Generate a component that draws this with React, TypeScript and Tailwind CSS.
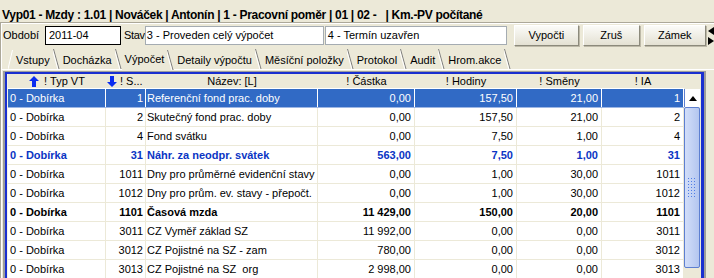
import React from 'react';

type Row = {
    typ: string;
    s: string;
    nazev: string;
    castka: string;
    hodiny: string;
    smeny: string;
    ia: string;
    kind?: 'sel' | 'blue' | 'bold';
};

const rows: Row[] = [
    { typ: '0 - Dobírka', s: '1', nazev: 'Referenční fond prac. doby', castka: '0,00', hodiny: '157,50', smeny: '21,00', ia: '1', kind: 'sel' },
    { typ: '0 - Dobírka', s: '2', nazev: 'Skutečný fond prac. doby', castka: '0,00', hodiny: '157,50', smeny: '21,00', ia: '2' },
    { typ: '0 - Dobírka', s: '4', nazev: 'Fond svátku', castka: '0,00', hodiny: '7,50', smeny: '1,00', ia: '4' },
    { typ: '0 - Dobírka', s: '31', nazev: 'Náhr. za neodpr. svátek', castka: '563,00', hodiny: '7,50', smeny: '1,00', ia: '31', kind: 'blue' },
    { typ: '0 - Dobírka', s: '1011', nazev: 'Dny pro průměrné evidenční stavy', castka: '0,00', hodiny: '1,00', smeny: '30,00', ia: '1011' },
    { typ: '0 - Dobírka', s: '1012', nazev: 'Dny pro prům. ev. stavy - přepočt.', castka: '0,00', hodiny: '1,00', smeny: '30,00', ia: '1012' },
    { typ: '0 - Dobírka', s: '1101', nazev: 'Časová mzda', castka: '11 429,00', hodiny: '150,00', smeny: '20,00', ia: '1101', kind: 'bold' },
    { typ: '0 - Dobírka', s: '3011', nazev: 'CZ Vyměř základ SZ', castka: '11 992,00', hodiny: '0,00', smeny: '0,00', ia: '3011' },
    { typ: '0 - Dobírka', s: '3012', nazev: 'CZ Pojistné na SZ - zam', castka: '780,00', hodiny: '0,00', smeny: '0,00', ia: '3012' },
    { typ: '0 - Dobírka', s: '3013', nazev: 'CZ Pojistné na SZ  org', castka: '2 998,00', hodiny: '0,00', smeny: '0,00', ia: '3013' },
];

const tabs = ['Vstupy', 'Docházka', 'Výpočet', 'Detaily výpočtu', 'Měsíční položky', 'Protokol', 'Audit', 'Hrom.akce'];

const ArrowUp = () => (
    <svg width="10" height="11" viewBox="0 0 10 11" className="shrink-0">
        <path d="M5 0 L10 5 L7 5 L7 11 L3 11 L3 5 L0 5 Z" fill="#0a2cf0" />
    </svg>
);

const ArrowDown = () => (
    <svg width="10" height="11" viewBox="0 0 10 11" className="shrink-0">
        <path d="M3 0 L7 0 L7 6 L10 6 L5 11 L0 6 L3 6 Z" fill="#0a2cf0" />
    </svg>
);

// right edge of an old style tab: "\"
const Slant = () => (
    <svg width="7" height="20" viewBox="0 0 7 20" className="shrink-0">
        <path d="M0.5 0 L6 20" stroke="#808080" strokeWidth="1" fill="none" />
        <path d="M-0.5 1 L5 21" stroke="#ffffff" strokeWidth="1" fill="none" />
    </svg>
);

const Button = ({ label, w }: { label: string; w: string }) => (
    <div
        className={`${w} h-[21px] flex items-center justify-center border border-t-white border-l-white border-r-[#8c8a7c] border-b-[#8c8a7c] bg-[#f1efe6] bg-linear-to-b from-[#fbfbf8] to-[#e4e1d3] shadow-[1px_1px_0_#bdb9a8]`}
    >
        {label}
    </div>
);

export default function App() {
    return (
        <div className="w-[714px] h-[278px] overflow-hidden bg-[#ECE9D8] text-[11px] text-black font-['Liberation_Sans',Arial,sans-serif]">
            <div className="h-[22px] pl-[2px] pt-[9px] font-bold text-[12px] leading-[13px] tracking-[-0.3px] whitespace-pre">
                Vyp01 - Mzdy : 1.01 | Nováček | Antonín | 1 - Pracovní poměr | 01 | 02 -   | Km.-PV počítané
            </div>
            <div className="border-t border-l border-[#aca899]">
                <div className="border-t border-l border-white">
                    {/* období / stav */}
                    <div className="h-[23px] flex items-center">
                        <span className="ml-[1px] w-[42px]">Období</span>
                        <div className="w-[76px] h-[19px] border border-black bg-white pl-[3px] leading-[17px]">2011-04</div>
                        <span className="ml-[3px] tracking-[-0.3px]">Stav</span>
                        <div className="w-[179px] h-[19px] border border-[#a5acb2] bg-white pl-[1px] leading-[17px]">3 - Proveden celý výpočet</div>
                        <div className="ml-[1px] w-[182px] h-[19px] border border-[#a5acb2] bg-white pl-[2px] leading-[17px]">4 - Termín uzavřen</div>
                        <div className="ml-[7px] flex gap-[4px]">
                            <Button label="Vypočti" w="w-[65px]" />
                            <Button label="Zruš" w="w-[57px]" />
                            <Button label="Zámek" w="w-[62px]" />
                        </div>
                        <div className="ml-[2px] flex flex-col gap-[2px]">
                            <svg width="6" height="8" viewBox="0 0 6 8"><path d="M6 0 L0 4 L6 8 Z" fill="#000" /></svg>
                            <svg width="6" height="8" viewBox="0 0 6 8"><path d="M0 0 L6 4 L0 8 Z" fill="#000" /></svg>
                        </div>
                    </div>

                    {/* tabs */}
                    <div className="h-[23px] flex items-end pl-[6px] border-b border-white">
                        <svg width="5" height="19" viewBox="0 0 5 19" className="shrink-0">
                            <path d="M4.5 0 L0 19" stroke="#ffffff" strokeWidth="1" fill="none" />
                        </svg>
                        {tabs.map((t) => (
                            <div key={t} className={`flex items-end ${t === 'Výpočet' ? 'h-[22px] -mb-[1px] bg-[#ECE9D8]' : 'h-[19px]'}`}>
                                <span className="px-[3px] leading-[18px] self-center">{t}</span>
                                <Slant />
                            </div>
                        ))}
                    </div>

                    {/* grid */}
                    <div className="mt-[1px] ml-[1px] w-[703px] border-l-2 border-t border-r-2 border-[#9d9d9d]">
                        <div className="border-l-2 border-t-2 border-r-[3px] border-r-double border-[#1a2fd0] flex">
                            <div className="w-[677px] border-l border-[#f4f2ea]">
                                <div className="h-[15px] flex items-center bg-[#ECE9D8] border-b border-white">
                                    <div className="w-[98px] flex items-center justify-center gap-[5px]"><ArrowUp /><span>! Typ VT</span></div>
                                    <div className="w-[40px] flex items-center gap-[3px] pl-[1px]"><ArrowDown /><span>! S...</span></div>
                                    <div className="w-[172px] text-center">Název: [L]</div>
                                    <div className="w-[97px] text-center">! Částka</div>
                                    <div className="w-[102px] text-center">! Hodiny</div>
                                    <div className="w-[85px] text-center">! Směny</div>
                                    <div className="w-[82px] text-center">! IA</div>
                                </div>
                                {rows.map((r) => {
                                    const sel = r.kind === 'sel';
                                    const line = sel ? 'border-[#9db6e4]' : 'border-[#ECE9D8]';
                                    const cls = `h-[19px] flex border-b ${line} ${sel ? 'bg-[#316AC5] text-white' : 'bg-white'} ${r.kind === 'blue' ? 'font-bold text-[#0a35c4]' : ''} ${r.kind === 'bold' ? 'font-bold' : ''}`;
                                    const cell = `border-r ${sel ? 'border-white' : 'border-[#ECE9D8]'} leading-[18px] whitespace-pre overflow-hidden`;
                                    return (
                                        <div key={r.s} className={cls}>
                                            <div className={`w-[98px] pl-[2px] ${cell}`}>{r.typ}</div>
                                            <div className={`w-[40px] pr-[2px] text-right ${cell}`}>{r.s}</div>
                                            <div className={`w-[172px] pl-[1px] ${cell}`}>{r.nazev}</div>
                                            <div className={`w-[97px] pr-[3px] text-right ${cell}`}>{r.castka}</div>
                                            <div className={`w-[102px] pr-[3px] text-right ${cell}`}>{r.hodiny}</div>
                                            <div className={`w-[85px] pr-[3px] text-right ${cell}`}>{r.smeny}</div>
                                            <div className={`w-[82px] pr-[3px] text-right ${cell}`}>{r.ia}</div>
                                        </div>
                                    );
                                })}
                            </div>
                            {/* scrollbar */}
                            <div className="w-[16px] flex flex-col pt-[15px] bg-[#ECE9D8]">
                                <div className="h-[18px] bg-white flex items-center justify-center border-l border-[#5d7fd0]">
                                    <svg width="8" height="5" viewBox="0 0 8 5"><path d="M4 0 L8 5 L0 5 Z" fill="#000" /></svg>
                                </div>
                                <div className="h-[161px] rounded-[2px] border border-[#5d7fd0] bg-[#c3d3f5] bg-linear-to-r from-[#d2def9] to-[#b4c6ef] flex items-center justify-center">
                                    <div className="w-[10px] h-[22px] bg-[radial-gradient(circle,#4f7de6_0.7px,transparent_1px)] bg-[length:3px_3px]" />
                                </div>
                                <div className="flex-1 bg-[#ECE9D8]" />
                            </div>
                        </div>
                    </div>
                </div>
            </div>
        </div>
    );
}
